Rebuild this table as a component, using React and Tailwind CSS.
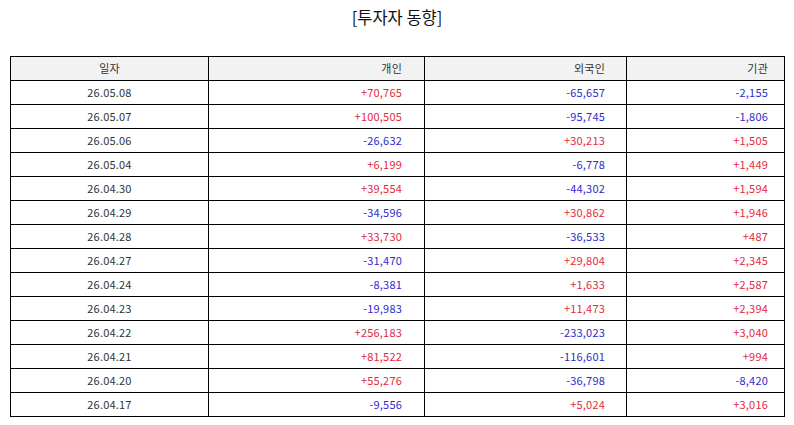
import React from 'react'

const rows = [
  ['26.05.08', '+70,765', '-65,657', '-2,155'],
  ['26.05.07', '+100,505', '-95,745', '-1,806'],
  ['26.05.06', '-26,632', '+30,213', '+1,505'],
  ['26.05.04', '+6,199', '-6,778', '+1,449'],
  ['26.04.30', '+39,554', '-44,302', '+1,594'],
  ['26.04.29', '-34,596', '+30,862', '+1,946'],
  ['26.04.28', '+33,730', '-36,533', '+487'],
  ['26.04.27', '-31,470', '+29,804', '+2,345'],
  ['26.04.24', '-8,381', '+1,633', '+2,587'],
  ['26.04.23', '-19,983', '+11,473', '+2,394'],
  ['26.04.22', '+256,183', '-233,023', '+3,040'],
  ['26.04.21', '+81,522', '-116,601', '+994'],
  ['26.04.20', '+55,276', '-36,798', '-8,420'],
  ['26.04.17', '-9,556', '+5,024', '+3,016'],
]

// right padding per numeric column (roughly 10% of its width)
const pads = ['pr-[22px]', 'pr-[21px]', 'pr-[16px]']

const tone = v => (v.startsWith('-') ? 'text-[#2b2bd0]' : 'text-[#e5283a]')

export default function App() {
  return (
    <div
      className="w-[794px] h-[425px] bg-white px-[10px] pt-[5px]"
      style={{ fontFamily: '"Noto Sans CJK KR", "Noto Sans", sans-serif' }}
    >
      <h1 className="text-center text-[16.5px] leading-[24px] text-[#111] h-[51px]">[투자자 동향]</h1>

      <table className="w-[774px] border-collapse table-fixed text-[11px] tracking-[0.2px] text-[#333]">
        <colgroup>
          <col className="w-[198px]" />
          <col className="w-[216px]" />
          <col className="w-[202px]" />
          <col className="w-[158px]" />
        </colgroup>
        <thead>
          <tr className="h-[23.5px] bg-[#f2f2f2]">
            <th className="border-[1.5px] border-black font-normal text-center">일자</th>
            <th className={`border-[1.5px] border-black font-normal text-right ${pads[0]}`}>개인</th>
            <th className={`border-[1.5px] border-black font-normal text-right ${pads[1]}`}>외국인</th>
            <th className={`border-[1.5px] border-black font-normal text-right ${pads[2]}`}>기관</th>
          </tr>
        </thead>
        <tbody>
          {rows.map(r => (
            <tr key={r[0]} className="h-[24px]">
              <td className="border-[1.5px] border-black text-center">{r[0]}</td>
              {r.slice(1).map((v, i) => (
                <td key={i} className={`border-[1.5px] border-black text-right ${pads[i]} ${tone(v)}`}>
                  {v}
                </td>
              ))}
            </tr>
          ))}
        </tbody>
      </table>
    </div>
  )
}
